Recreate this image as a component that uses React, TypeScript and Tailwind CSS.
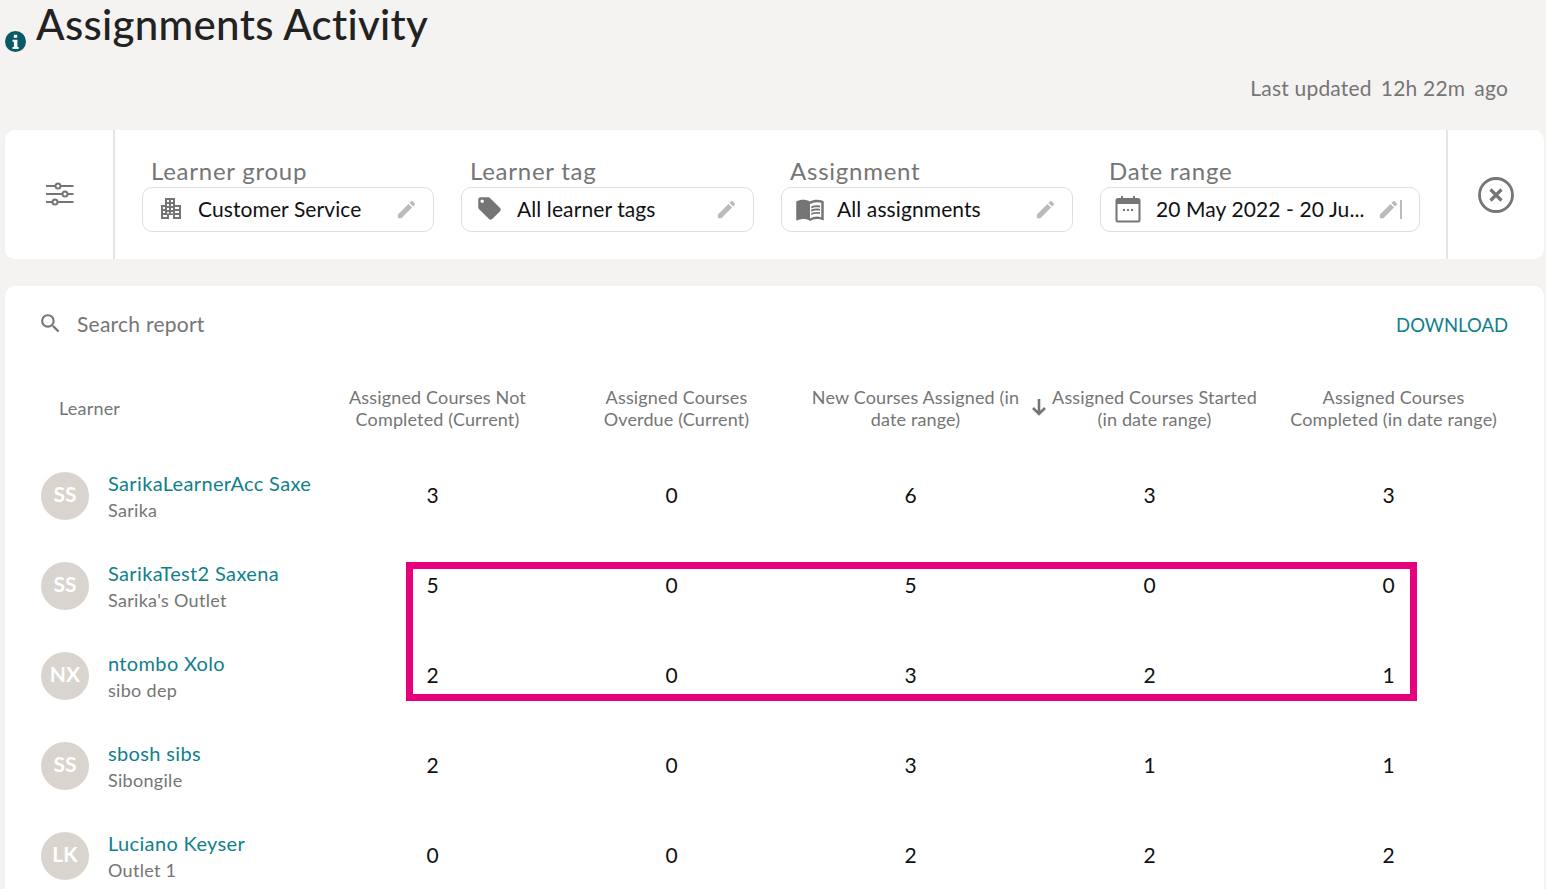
import { MdEdit, MdLocalOffer, MdMenuBook, MdSearch } from "react-icons/md";

const font = "font-['Lato','Open_Sans',sans-serif]";

const rows = [
  { initials: "SS", name: "SarikaLearnerAcc Saxe", group: "Sarika", values: [3, 0, 6, 3, 3] },
  { initials: "SS", name: "SarikaTest2 Saxena", group: "Sarika's Outlet", values: [5, 0, 5, 0, 0] },
  { initials: "NX", name: "ntombo Xolo", group: "sibo dep", values: [2, 0, 3, 2, 1] },
  { initials: "SS", name: "sbosh sibs", group: "Sibongile", values: [2, 0, 3, 1, 1] },
  { initials: "LK", name: "Luciano Keyser", group: "Outlet 1", values: [0, 0, 2, 2, 2] },
];

const columns = [
  "Assigned Courses Not\nCompleted (Current)",
  "Assigned Courses\nOverdue (Current)",
  "New Courses Assigned (in\ndate range)",
  "Assigned Courses Started\n(in date range)",
  "Assigned Courses\nCompleted (in date range)",
];

function InfoIcon() {
  return (
    <svg className="mt-[31px] shrink-0" width="21" height="21" viewBox="0 0 21 21">
      <circle cx="10.500" cy="10.500" r="10.500" fill="#0a5a66" />
      <path d="M8.800 3.800h3.400v3H8.800zM7.500 8.800h4.900v7.200h1.300v1.900H7.500V16h1.400v-5.300H7.500z" fill="#fff" />
    </svg>
  );
}

function SlidersIcon() {
  return (
    <svg width="28" height="24" viewBox="0 0 28 24" fill="none" stroke="#757575" strokeWidth="2">
      <path d="M0 4h9.500M14.500 4h13M0 12h16.500M21.500 12h6M0 20h6.500M11.500 20h16" />
      <circle cx="12" cy="4" r="2.500" />
      <circle cx="19" cy="12" r="2.500" />
      <circle cx="9" cy="20" r="2.500" />
    </svg>
  );
}

function BuildingIcon() {
  return (
    <svg width="22" height="21" viewBox="0 0 22 21" fill="#757575">
      <path
        fillRule="evenodd"
        d="M5 0h10v7h6v14h-8v-4H9v4H1V7h4zM7 2v2h2V2zm4 0v2h2V2zM7 6v2h2V6zm4 0v2h2V6zM3 9v2h2V9zm4 1v2h2v-2zm4 0v2h2v-2zm4-1v2h4V9zM3 13v2h2v-2zm4 1v1.500h2V14zm4 0v1.500h2V14zm4-1v2h4v-2zM3 17v2h4v-2zm12 0v2h4v-2z"
      />
    </svg>
  );
}

function CalendarIcon() {
  return (
    <svg width="26" height="28" viewBox="0 0 26 28" fill="none">
      <path d="M2 4h22v5H2z" fill="#757575" />
      <rect x="1.500" y="4" width="23" height="22.500" rx="1.500" stroke="#757575" strokeWidth="2" />
      <path d="M7 1v5M19 1v5" stroke="#757575" strokeWidth="2" />
      <path d="M8 15h2M12 15h2M16 15h2" stroke="#757575" strokeWidth="2" />
    </svg>
  );
}

function CloseCircleIcon() {
  return (
    <svg width="36" height="36" viewBox="0 0 36 36" fill="none" stroke="#757575">
      <circle cx="18" cy="18" r="16.500" strokeWidth="2.800" />
      <path d="M12.500 12.500l11 11M23.500 12.500l-11 11" strokeWidth="3.200" />
    </svg>
  );
}

function SortArrow() {
  return (
    <svg width="16" height="18" viewBox="0 0 16 18" fill="none" stroke="#757575" strokeWidth="2.600">
      <path d="M8 1v15M2 10l6 6 6-6" />
    </svg>
  );
}

function FilterBox({
  label,
  value,
  icon,
  width,
  cursor,
}: {
  label: string;
  value: string;
  icon: React.ReactNode;
  width: string;
  cursor?: boolean;
}) {
  return (
    <div className={`flex flex-col ${width}`}>
      <div className="mb-[2px] pl-[9px] text-[24px] leading-[28px] tracking-[0.75px] text-[#757575]">{label}</div>
      <div className={`flex h-[45px] items-center rounded-[10px] border border-[#e0dedc] pl-[14px] ${cursor ? "pr-[17px]" : "pr-[15px]"}`}>
        <div className="flex w-[41px] shrink-0 items-center pb-[2px]">{icon}</div>
        <span className="flex-1 truncate pb-[2px] text-[21px] tracking-[0.1px] text-[#111]">{value}</span>
        <MdEdit className="shrink-0 text-[#bdbbb9]" size={23} />
        {cursor && <div className="h-[19px] w-[2px] bg-[#bdbbb9]" />}
      </div>
    </div>
  );
}

export default function App() {
  return (
    <div className={`relative h-[889px] overflow-hidden bg-[#f5f3f1] ${font}`}>
      <div className="h-[130px] pl-[5px] pr-[38px]">
        <div className="flex h-[58px] items-start">
          <InfoIcon />
          <h1 className="ml-[10px] -mt-[1px] text-[42px] font-medium leading-[50px] tracking-[0.3px] text-[#222]">
            Assignments Activity
          </h1>
        </div>
        <div className="mt-[17px] flex justify-end gap-[9px] text-[21px] leading-[26px] tracking-[0.2px] text-[#757575]">
          <span>Last updated</span>
          <span>12h 22m</span>
          <span>ago</span>
        </div>
      </div>

      <div className="ml-[5px] mr-[2px] flex h-[129px] rounded-[10px] bg-white">
        <div className="flex w-[110px] items-center justify-center border-r-2 border-[#e6e4e2] pb-[2px] pl-[1px]">
          <SlidersIcon />
        </div>
        <div className="flex flex-1 items-start gap-[27px] pl-[27px] pr-[26px] pt-[27px]">
          <FilterBox label="Learner group" value="Customer Service" icon={<span className="pl-[3px]"><BuildingIcon /></span>} width="w-[292px]" />
          <FilterBox label="Learner tag" value="All learner tags" icon={<MdLocalOffer className="text-[#757575]" size={27} />} width="w-[293px]" />
          <FilterBox label="Assignment" value="All assignments" icon={<MdMenuBook className="-ml-[1px] text-[#757575]" size={30} />} width="w-[292px]" />
          <FilterBox label="Date range" value="20 May 2022 - 20 Ju..." icon={<CalendarIcon />} width="w-[320px]" cursor />
        </div>
        <div className="flex w-[98px] items-center justify-center border-l-2 border-[#e6e4e2]">
          <CloseCircleIcon />
        </div>
      </div>

      <div className="ml-[5px] mr-[2px] mt-[27px] h-[640px] rounded-[10px] bg-white pl-[36px] pr-[36px]">
        <div className="flex h-[77px] items-center justify-between">
          <div className="flex items-center pb-[2px] text-[21px] tracking-[0.25px] text-[#757575]">
            <MdSearch className="-ml-[3px] mr-[14px]" size={25} />
            Search report
          </div>
          <span className="pt-[3px] text-[18.5px] text-[#0f7f8c]">DOWNLOAD</span>
        </div>

        <div className="grid grid-cols-[277px_repeat(5,239px)] pt-[21px]">
          <div className="flex h-[48px] items-center pl-[18px] text-[18px] tracking-[0.2px] text-[#757575]">Learner</div>
          {columns.map((title, i) => (
            <div key={title} className="relative flex h-[48px] items-center justify-center text-center text-[18px] leading-[22px] tracking-[0.15px] text-[#757575]">
              {i === 3 && (
                <span className="absolute -left-[4px] top-[14px]">
                  <SortArrow />
                </span>
              )}
              <span className="whitespace-pre-line">{title}</span>
            </div>
          ))}
        </div>

        <div className="pt-[19px]">
          {rows.map((row) => (
            <div key={row.name} className="grid h-[90px] grid-cols-[277px_repeat(5,239px)] items-center">
              <div className="flex items-center">
                <div className="flex h-[48px] w-[48px] items-center justify-center rounded-full bg-[#d9d4ce] pb-[5px] text-[21px] font-bold text-white">
                  {row.initials}
                </div>
                <div className="ml-[19px]">
                  <div className="text-[20px] leading-[26px] tracking-[0.35px] text-[#0f7f8c]">{row.name}</div>
                  <div className="pt-[1px] text-[18px] leading-[26px] tracking-[0.3px] text-[#757575]">{row.group}</div>
                </div>
              </div>
              {row.values.map((v, i) => (
                <div key={i} className="pb-[3px] pr-[10px] text-center text-[21px] text-[#111]">
                  {v}
                </div>
              ))}
            </div>
          ))}
        </div>
      </div>

      {/* annotation box from the screenshot */}
      <div className="absolute left-[406px] top-[562px] h-[139px] w-[1011px] border-[7px] border-[#e6007e]" />
    </div>
  );
}
